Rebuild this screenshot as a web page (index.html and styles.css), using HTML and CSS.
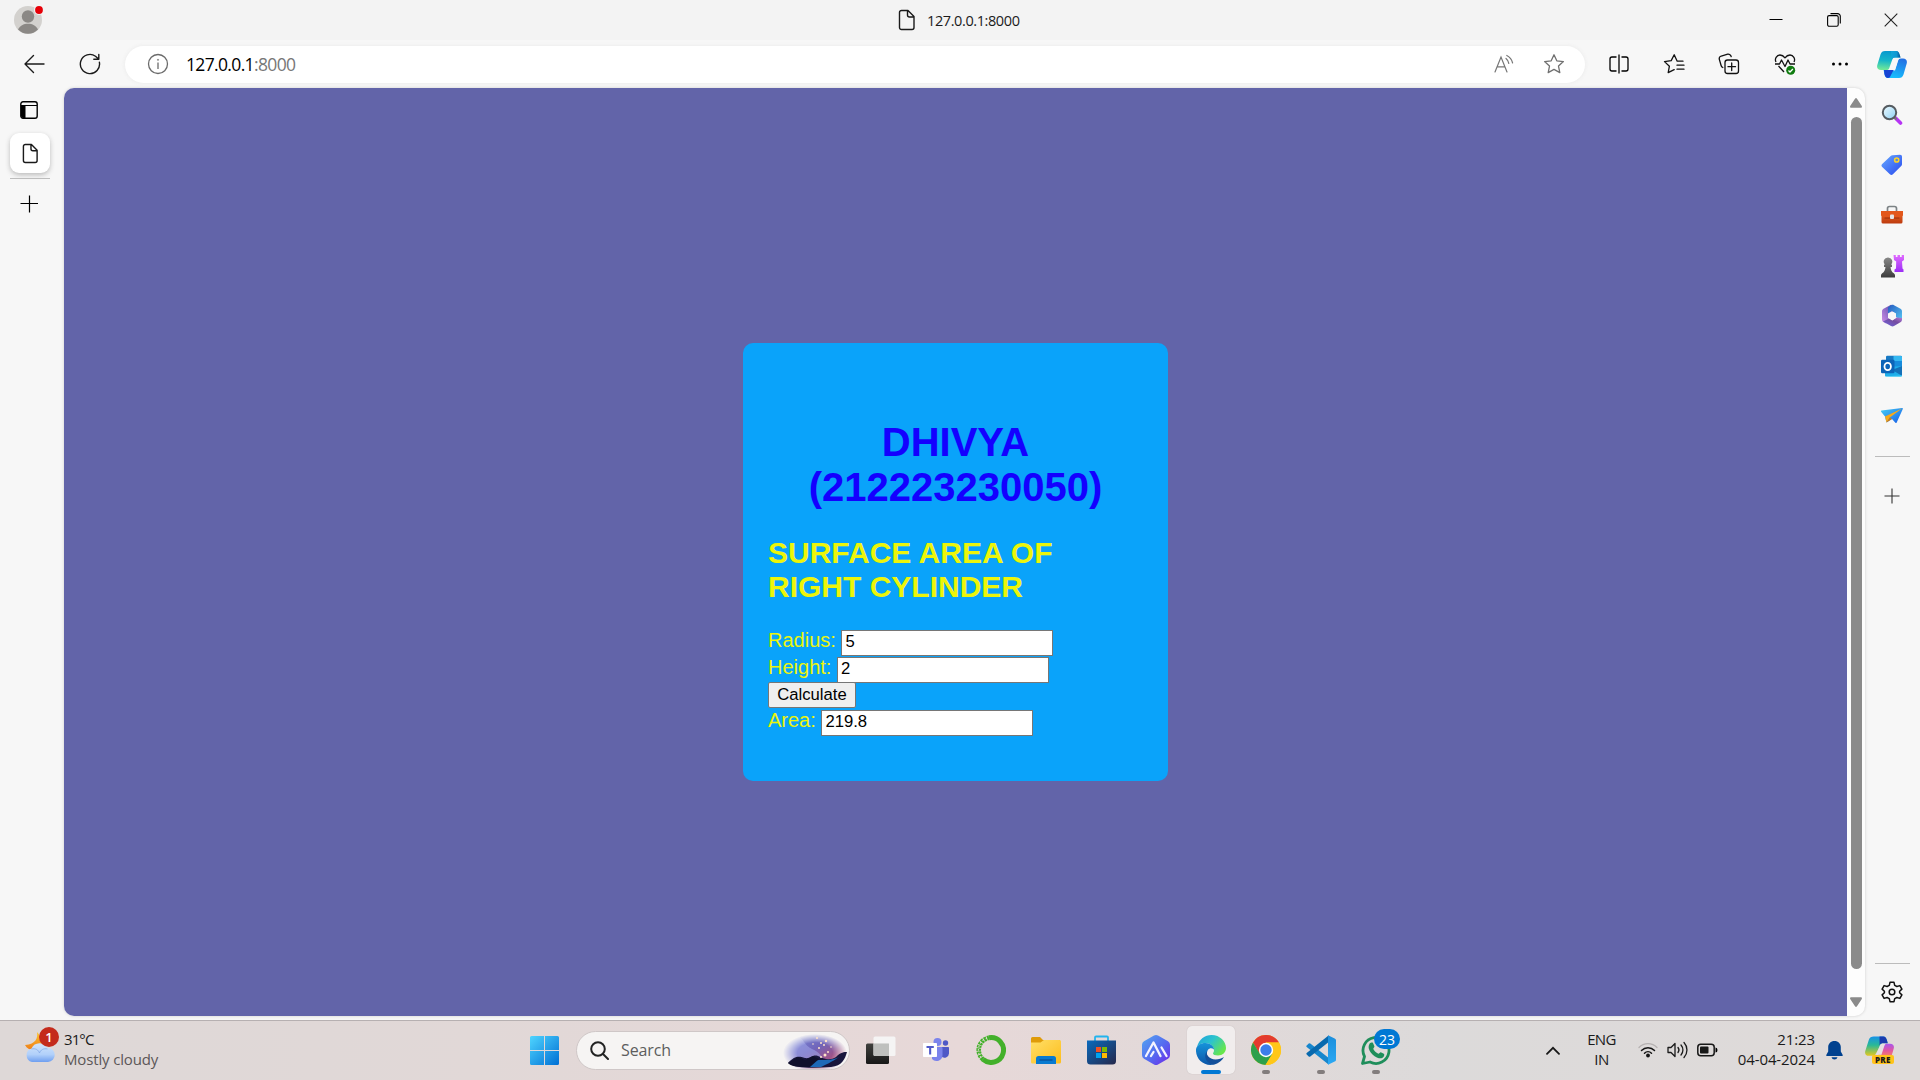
FILE: index.html
```html
<!DOCTYPE html>
<html lang="en">
<head>
<meta charset="utf-8">
<title>127.0.0.1:8000</title>
<link rel="stylesheet" href="styles.css">
</head>
<body>
<svg class="defs" width="0" height="0" aria-hidden="true">
  <defs>
    <linearGradient id="win" x1="0" y1="0" x2="1" y2="1"><stop offset="0" stop-color="#4fd5ff"/><stop offset="1" stop-color="#006fd4"/></linearGradient>
    <linearGradient id="cpTop" x1="0" y1="0" x2="1" y2="0"><stop offset="0" stop-color="#12a5d8"/><stop offset=".6" stop-color="#1098d2"/><stop offset="1" stop-color="#064a90"/></linearGradient>
    <linearGradient id="cpLeft" x1=".4" y1="0" x2=".3" y2="1"><stop offset="0" stop-color="#0798ce"/><stop offset=".5" stop-color="#16b6c9"/><stop offset="1" stop-color="#74eb96"/></linearGradient>
    <linearGradient id="cpRight" x1=".7" y1="0" x2=".3" y2="1"><stop offset="0" stop-color="#2371e4"/><stop offset="1" stop-color="#16c3ff"/></linearGradient>
    <linearGradient id="tag" x1="0" y1="0" x2="1" y2="1"><stop offset="0" stop-color="#67aaff"/><stop offset="1" stop-color="#2848ee"/></linearGradient>
    <linearGradient id="lens" x1="0" y1="0" x2="1" y2="1"><stop offset="0" stop-color="#f0fbff"/><stop offset="1" stop-color="#8dd0f4"/></linearGradient>
    <linearGradient id="rook" x1="0" y1="0" x2="0" y2="1"><stop offset="0" stop-color="#e06bff"/><stop offset="1" stop-color="#9b2df5"/></linearGradient>
    <linearGradient id="pawn" x1="0" y1="0" x2="0" y2="1"><stop offset="0" stop-color="#888"/><stop offset="1" stop-color="#3c3c3c"/></linearGradient>
    <linearGradient id="box" x1="0" y1="0" x2="0" y2="1"><stop offset="0" stop-color="#ed6b24"/><stop offset="1" stop-color="#bd3a0f"/></linearGradient>
    <linearGradient id="m1" x1="0" y1="1" x2="1" y2="0"><stop offset="0" stop-color="#d090e8"/><stop offset="1" stop-color="#5146a8"/></linearGradient>
    <linearGradient id="m2" x1="0" y1="0" x2="1" y2="1"><stop offset="0" stop-color="#235ac0"/><stop offset="1" stop-color="#58c8f4"/></linearGradient>
    <linearGradient id="m3" x1="0" y1="1" x2="1" y2="0"><stop offset="0" stop-color="#6d67e0"/><stop offset=".6" stop-color="#754ca0"/><stop offset="1" stop-color="#b57bd8"/></linearGradient>
    <linearGradient id="plane" x1="0" y1="0" x2="1" y2="1"><stop offset="0" stop-color="#45cff5"/><stop offset="1" stop-color="#175be8"/></linearGradient>
    <linearGradient id="cloud" x1="0" y1="0" x2="0" y2="1"><stop offset="0" stop-color="#d1e4fb"/><stop offset=".6" stop-color="#b1d0fa"/><stop offset="1" stop-color="#6f9ff0"/></linearGradient>
    <linearGradient id="moon" x1="0" y1="0" x2="0" y2="1"><stop offset="0" stop-color="#fcc531"/><stop offset="1" stop-color="#ee7c18"/></linearGradient>
    <linearGradient id="dark" x1="0" y1="0" x2="0" y2="1"><stop offset="0" stop-color="#40413e"/><stop offset="1" stop-color="#181818"/></linearGradient>
    <linearGradient id="folder" x1="0" y1="0" x2="1" y2="1"><stop offset="0" stop-color="#ffdf68"/><stop offset="1" stop-color="#fdbd1c"/></linearGradient>
    <linearGradient id="store" x1="0" y1="0" x2="1" y2="1"><stop offset="0" stop-color="#0a6abd"/><stop offset="1" stop-color="#26284b"/></linearGradient>
    <linearGradient id="hex" x1="0" y1="0" x2="1" y2="1"><stop offset="0" stop-color="#54a7f0"/><stop offset=".55" stop-color="#5569f0"/><stop offset="1" stop-color="#7026e8"/></linearGradient>
    <linearGradient id="edgeTop" x1="0" y1="0" x2="1" y2=".6"><stop offset="0" stop-color="#1f9fdc"/><stop offset=".5" stop-color="#2cc3ce"/><stop offset="1" stop-color="#67e64c"/></linearGradient>
    <linearGradient id="edgeBody" x1="0" y1="0" x2="0" y2="1"><stop offset="0" stop-color="#1593da"/><stop offset="1" stop-color="#0c55a8"/></linearGradient>
    <linearGradient id="vsc" x1="0" y1="0" x2="0" y2="1"><stop offset="0" stop-color="#1c8edb"/><stop offset="1" stop-color="#2ba9f4"/></linearGradient>
    <linearGradient id="pre1" x1="0" y1="0" x2="0" y2="1"><stop offset="0" stop-color="#1691e8"/><stop offset=".45" stop-color="#29b996"/><stop offset="1" stop-color="#e5c81f"/></linearGradient>
    <linearGradient id="pre2" x1="0" y1="0" x2="0" y2="1"><stop offset="0" stop-color="#a956ee"/><stop offset=".5" stop-color="#e2579f"/><stop offset="1" stop-color="#fb8a58"/></linearGradient>
    <linearGradient id="sky" x1="0" y1="0" x2="1" y2="1"><stop offset="0" stop-color="#7f99e4"/><stop offset=".45" stop-color="#7065ba"/><stop offset=".75" stop-color="#a94f7d"/><stop offset="1" stop-color="#6d69c5"/></linearGradient>
    <radialGradient id="fade"><stop offset=".55" stop-color="#fff"/><stop offset="1" stop-color="#000"/></radialGradient>
    <mask id="skyMask"><ellipse cx="32" cy="20" rx="32" ry="19" fill="url(#fade)"/></mask>
  </defs>
</svg>

<header class="titlebar">
  <div class="avatar">
    <svg width="32" height="32" viewBox="0 0 32 32"><circle cx="15" cy="17" r="14" fill="#d3d1ce"/><circle cx="15" cy="13.5" r="6.2" fill="#8b8885"/><path d="M5 26.6c2-4 5.500-5.800 10-5.800s8 1.800 10 5.800A14 14 0 0 1 5 26.600z" fill="#8b8885"/><circle cx="26" cy="7" r="5" fill="#f3f3f3"/><circle cx="26" cy="7" r="3.900" fill="#e60008"/></svg>
  </div>
  <div class="page-title">
    <svg width="18" height="22" viewBox="0 0 18 22" fill="none" stroke="#1a1a1a" stroke-width="1.400" stroke-linejoin="round"><path d="M3.500 1.500H10l6 6v11a2 2 0 0 1-2 2H3.500a2 2 0 0 1-2-2v-15a2 2 0 0 1 2-2zM9.500 1.500V6a2 2 0 0 0 2 2H16"/></svg>
    <span>127.0.0.1:8000</span>
  </div>
  <div class="window-controls">
    <svg width="14" height="14" viewBox="0 0 14 14" stroke="#000"><path d="M.5 6.500h13"/></svg>
    <svg width="14" height="14" viewBox="0 0 14 14" stroke="#000" stroke-width="1.100" fill="none"><rect x=".6" y="2.600" width="10.600" height="10.600" rx="1.500"/><path d="M3.500.6h7A2.700 2.700 0 0 1 13.300 3.300V10.500"/></svg>
    <svg width="14" height="14" viewBox="0 0 14 14" stroke="#222" stroke-width="1.100"><path d="M.7.7l12.600 12.600M13.300.7L.7 13.300"/></svg>
  </div>
</header>

<nav class="toolbar">
  <svg class="back" width="22" height="20" viewBox="0 0 22 20" fill="none" stroke="#1b1b1b" stroke-width="1.400" stroke-linecap="round" stroke-linejoin="round"><path d="M10.500 1.500L2 10l8.500 8.500M2 10h19"/></svg>
  <svg class="reload" width="22" height="22" viewBox="0 0 22 22" fill="none" stroke="#1b1b1b" stroke-width="1.400" stroke-linecap="round" stroke-linejoin="round"><path d="M20.400 9.300A9.600 9.600 0 1 1 16.500 3.200L19.600 6M19.800 1.500V6.300h-5"/></svg>
  <div class="address">
    <svg width="22" height="22" viewBox="0 0 22 22" fill="none" stroke="#6b6b6b" stroke-width="1.300"><circle cx="11" cy="11" r="9.500"/><path d="M11 9.500v6.500"/><circle cx="11" cy="6.800" r=".6" fill="#6b6b6b" stroke-width=".6"/></svg>
    <span class="url">127.0.0.1<i>:8000</i></span>
    <svg class="read" width="20" height="20" viewBox="0 0 20 20" fill="none" stroke="#767676" stroke-width="1.200" stroke-linecap="round"><path d="M1 18L7 3l6 15M3.200 12.800h7.600M12 4.500a8 8 0 0 1 2.800 4.800M12.800 1.500A11 11 0 0 1 18.600 9"/></svg>
    <svg class="star" width="22" height="22" viewBox="0 0 22 22" fill="none" stroke="#707070" stroke-width="1.300" stroke-linejoin="round"><path d="M11 1.800l2.800 6 6.600.8-4.900 4.500 1.300 6.500L11 16.400l-5.800 3.200 1.300-6.500L1.600 8.600l6.600-.8z"/></svg>
  </div>
  <div class="actions">
    <span><svg width="20" height="20" viewBox="0 0 20 20" fill="none" stroke="#000" stroke-width="1.300"><path d="M10 .5v19M7.500 3H3a2 2 0 0 0-2 2v10a2 2 0 0 0 2 2h4.500M12.500 3H17a2 2 0 0 1 2 2v10a2 2 0 0 1-2 2h-4.500"/></svg></span>
    <span><svg width="22" height="22" viewBox="0 0 22 22" fill="none" stroke="#111" stroke-width="1.300" stroke-linejoin="round" stroke-linecap="round"><path d="M20 8.200h-5.800L11.200 1.800 8.200 7.600 1.500 8.600l4.900 4.600-1.200 6.500 6-3.100M14 12.200h7M14 16.200h7"/></svg></span>
    <span><svg width="22" height="22" viewBox="0 0 22 22" fill="none" stroke="#111" stroke-width="1.300" stroke-linecap="round"><rect x="7" y="7" width="13.500" height="13.500" rx="2.500"/><path d="M13.700 10v7.500M10 13.700h7.500M4.800 14.500a3 3 0 0 1-1.700-2L1.200 6A3 3 0 0 1 3.300 3l6.400-1.800a3 3 0 0 1 3.500 2.400"/></svg></span>
    <span><svg width="22" height="22" viewBox="0 0 22 22" fill="none" stroke="#111" stroke-width="1.300" stroke-linejoin="round"><path d="M2 9C.3 5.800 2.700 2 6 2c2.300 0 3.800 1.200 5 2.800C12.200 3.200 13.700 2 16 2c3.300 0 5.700 3.800 4 7M1 11h4.500l2-4 3.500 6.500L14 7l2 4h5M4.500 13l5.500 6"/><circle cx="16.700" cy="17.300" r="4.500" fill="#107c10" stroke="none"/><path d="M14.500 17.500l1.500 1.500 2.900-3" stroke="#fff"/></svg></span>
    <span><svg width="18" height="6" viewBox="0 0 18 6"><circle cx="2.500" cy="3" r="1.500"/><circle cx="9" cy="3" r="1.500"/><circle cx="15.500" cy="3" r="1.500"/></svg></span>
    <span class="copilot"><svg width="30" height="27" viewBox="0 0 30 27"><path d="M8 0h11c2 0 3 1.500 3.700 4l.8 2.500h-5.500c-1.500 0-2.300.8-2.900 2.600L12.300 17c-.5 1.400-1.300 2-2.800 2H4c-3 0-4.500-2-3.700-5L3.500 3.500C4.300 1 5.700 0 8 0z" fill="url(#cpLeft)"/><path d="M14 0h5c2 0 3 1.500 3.700 4l.8 2.500H17.500c-1.500 0-2.300.8-2.900 2.600z" fill="url(#cpTop)"/><path d="M22 27H11c-2 0-3-1.500-3.600-4L6.600 19H10l8 .5 3-9.500c.5-1.700 1.300-2.500 3-2.500h2c3 0 4.500 2 3.700 5L26.500 23.500C25.700 26 24.300 27 22 27z" fill="url(#cpRight)"/><path d="M7 19h9.500L13.500 25c-.5 1.300-1.200 2-2.500 2-2 0-3-1.500-3.600-4z" fill="#1743d3"/><path d="M18 7h5.500c-1.500.3-2.200 1-2.700 2.700l-2.500 8c-.4 1-1 1.300-2 1.300h-5c1.200-.2 1.700-.9 2.100-2.200l2.500-7.500C16.400 7.700 17 7 18 7z" fill="#f7f7f7"/></svg></span>
  </div>
</nav>

<main class="workspace">
  <aside class="tabs">
    <svg class="tabs-toggle" width="18" height="18" viewBox="0 0 18 18"><rect x=".8" y=".8" width="16.400" height="16.400" rx="2.200" fill="none" stroke="#000" stroke-width="1.400"/><path d="M1 5h4.500v12H3a2 2 0 0 1-2-2zM1 4.100h16v.8H1z"/></svg>
    <div class="tab"><svg width="17" height="21" viewBox="0 0 18 22" fill="none" stroke="#1a1a1a" stroke-width="1.500" stroke-linejoin="round"><path d="M3.500 1.500H10l6 6v11a2 2 0 0 1-2 2H3.500a2 2 0 0 1-2-2v-15a2 2 0 0 1 2-2zM9.500 1.500V6a2 2 0 0 0 2 2H16"/></svg></div>
    <div class="tab-line"></div>
    <svg class="tab-new" width="18" height="18" viewBox="0 0 18 18" stroke="#000" stroke-width="1.200"><path d="M9.500 .5v17M.5 8.500h18"/></svg>
  </aside>

  <section class="frame">
    <div class="page">
      <div class="card">
        <h1>DHIVYA (212223230050)</h1>
        <h2>SURFACE AREA OF RIGHT CYLINDER</h2>
        <form>
          <div class="row"><label for="radius">Radius:</label><input id="radius" type="text" value="5"></div>
          <div class="row"><label for="height">Height:</label><input id="height" type="text" value="2"></div>
          <div class="row"><button type="button">Calculate</button></div>
          <div class="row"><label for="area">Area:</label><input id="area" type="text" value="219.8"></div>
        </form>
      </div>
    </div>
    <div class="scrollbar">
      <svg width="12" height="10" viewBox="0 0 12 10"><path d="M5 .8a1.200 1.200 0 0 1 2 0L11.800 8c.4.900 0 1.800-1 1.800H1.200c-1 0-1.400-.9-1-1.800z" fill="#8b8b8b"/></svg>
      <div class="thumb"></div>
      <svg width="12" height="10" viewBox="0 0 12 10"><path d="M5 9.200a1.200 1.200 0 0 0 2 0L11.800 2c.4-.9 0-1.800-1-1.800H1.200c-1 0-1.400.9-1 1.800z" fill="#8b8b8b"/></svg>
    </div>
  </section>

  <aside class="sidebar">
    <div class="apps">
      <span><svg width="22" height="22" viewBox="0 0 22 22"><path d="M14.500 14l5 5" stroke="#b634f4" stroke-width="3.600" stroke-linecap="round"/><path d="M12.500 12.500l3 3" stroke="#777" stroke-width="2"/><circle cx="8.500" cy="8.500" r="6.700" fill="url(#lens)" stroke="#555b60" stroke-width="2"/></svg></span>
      <span><svg width="22" height="22" viewBox="0 0 22 22"><path d="M11.500 1.300L19 .7c1.400 0 2 .7 2 2v7.500c0 .8-.3 1.400-.8 1.900l-8.300 8.200c-1 1-2 1-3 0L1.200 13c-1-1-1-2 0-3l8.500-8c.5-.5 1-.7 1.800-.7z" fill="url(#tag)"/><circle cx="15.700" cy="6" r="2.100" fill="#5f8bd0" stroke="#ffd325" stroke-width="1.500"/></svg></span>
      <span><svg width="24" height="20" viewBox="0 0 24 20"><path d="M7.500 6V3.500a2 2 0 0 1 2-2h5a2 2 0 0 1 2 2V6" fill="none" stroke="#7c8285" stroke-width="1.700"/><rect x="1.500" y="6" width="21" height="12.500" rx="1.500" fill="url(#box)"/><path d="M1 6h22v4.500l-4 2.500H5l-4-2.500z" fill="#e3571b"/><path d="M4.500 13h15" stroke="#962e0d"/><rect x="10" y="9.500" width="4" height="4.500" rx="1" fill="#e5e5e5"/></svg></span>
      <span><svg width="24" height="24" viewBox="0 0 24 24"><path d="M13.500 1h2.300v2h1.700V1h2.500v2h1.700V1H24v5l-2 1.500.5 7 1 1V18h-9v-2.500l1.500-1 .2-7-2.200-1.500z" fill="url(#rook)"/><path d="M8 3.500a4.300 4.300 0 0 1 3.300 7.200l.7.300v2h-1.500c.3 3 1.200 5 3.300 6.300.8.500 1.200 1.200 1.200 2v2.200H1v-2.200c0-.8.400-1.500 1.200-2C4.300 18 5.200 16 5.500 13H4v-2l.7-.3A4.300 4.300 0 0 1 8 3.500z" fill="url(#pawn)"/></svg></span>
      <span><svg width="22" height="23" viewBox="0 0 22 23"><path d="M10 .7L3 4.500C1.700 5.200 1 6.300 1 7.500v8c0 1.200.7 2.300 1.700 2.800L5 19.500l5-3V11c0-2 3-3 3-4.500z" fill="url(#m1)"/><path d="M7 9.500V3.500l3-2.200c1-.6 2-.6 3 0l6.500 3.500c1 .7 1.500 1.500 1.500 2.700v9L15 13V10L11 7z" fill="url(#m2)"/><path d="M2 17.500l6-3 3.500 2 4-3 5.500.5v1.500c0 1.200-.6 2.300-1.600 2.800L13 22c-1 .6-2 .6-3 0z" fill="url(#m3)"/><path d="M11 7.300l4 2.200v4.400l-4 2.400-4-2.400V9.500z" fill="#f7f7f7"/></svg></span>
      <span><svg width="22" height="22" viewBox="0 0 22 22"><rect x="5" y=".7" width="16" height="17" rx="1.200" fill="#1779c4"/><path d="M12.500 1H20q1 0 1 1v8h-8.500z" fill="#35b8f1"/><path d="M13 6h8v6h-8z" fill="#178bdc"/><path d="M4 12h4l13-1v9.500q0 1-1 1H5q-1 0-1-1z" fill="#1eaeea"/><path d="M21 11v9.800L11 15z" fill="#1470b8"/><path d="M4 21.300L21 20.500v.5c0 .3-.5.5-1 .5H5z" fill="#41cff7"/><rect y="4.800" width="13.500" height="13.500" rx="1.200" fill="#0c64b8"/><ellipse cx="6.700" cy="11.500" rx="3.200" ry="3.600" fill="none" stroke="#fff" stroke-width="1.800"/></svg></span>
      <span><svg width="24" height="20" viewBox="0 0 24 20"><path d="M1.500 4.500L22 2c.8 0 1 .6.700 1.200l-6 13.300c-.3.700-.9.700-1.300.2L12 13l-5.500 3.500-1.500-6L1.300 6C.8 5.400.8 4.700 1.500 4.500z" fill="url(#plane)"/><path d="M22 2.500L5 10.500l1.500 6 3.300-5z" fill="#f7a91a"/><path d="M6.500 16.500l3.300-5 2.200 1.500z" fill="#d97a07"/></svg></span>
    </div>
    <hr>
    <svg class="add" width="16" height="16" viewBox="0 0 16 16" stroke="#333" stroke-width="1.100"><path d="M8 .5v15M.5 8h15"/></svg>
    <hr class="bottom-line">
    <svg class="gear" width="22" height="22" viewBox="0 0 22 22" fill="none" stroke="#111" stroke-width="1.500" stroke-linejoin="round"><path d="M9 1.300h4l.7 3 2.200 1.200 3-.9 2 3.500-2.300 2.100v1.600l2.300 2.100-2 3.500-3-.9-2.200 1.200-.7 3H9l-.7-3-2.200-1.200-3 .9-2-3.500 2.300-2.100v-1.600L1.100 8.100l2-3.500 3 .9 2.200-1.200z"/><circle cx="11" cy="11" r="2.800"/></svg>
  </aside>
</main>

<footer class="taskbar">
  <div class="weather">
    <svg width="32" height="36" viewBox="0 0 32 36"><path d="M13 5c1 6-1 12-12 13 2 4 6 6 12 5l9-7z" fill="url(#moon)"/><path d="M8 35a7 7 0 0 1-.5-13.500A9 9 0 0 1 23.500 21 7 7 0 0 1 24 35z" fill="url(#cloud)"/><path d="M7.500 22c4-1 7 1 8 4 1-3 4-5 8-4" fill="none" stroke="#86abe8" stroke-width=".8"/></svg>
    <b class="badge red">1</b>
    <div class="weather-text"><span>31°C</span><span class="muted">Mostly cloudy</span></div>
  </div>

  <div class="dock">
    <svg class="start" width="29" height="29" viewBox="0 0 29 29"><path d="M0 1.500Q0 0 1.500 0H14v14H0zM15 0h12.500Q29 0 29 1.500V14H15zM0 15h14v14H1.500Q0 29 0 27.500zM15 15h14v12.500q0 1.500-1.500 1.500H15z" fill="url(#win)"/></svg>
    <div class="search">
      <svg width="19" height="19" viewBox="0 0 19 19" fill="none" stroke="#222" stroke-width="2" stroke-linecap="round"><circle cx="8" cy="8" r="6.800"/><path d="M13 13l5 5"/></svg>
      <span>Search</span>
      <svg class="scene" width="66" height="36" viewBox="0 0 66 36"><g mask="url(#skyMask)"><rect width="66" height="36" fill="url(#sky)"/><path d="M12 2c10 3 8 10 17 14 8 3 10 9 14 12H0V8z" fill="#a3a8ea" opacity=".55"/></g><path d="M5 30c7-7 10-7 17-5 6 1 7-4 13-2 6 3 12 5 18 1 5-5 8-5 11-5-2 7-5 14-16 15-16 1-35 2-43-4z" fill="#18163c"/><path d="M24 34c5-4 7-7 12-7 8 0 15 0 20-3-7 5-14 8-18 10z" fill="#1d69b8"/><path d="M5 30l10-6 7 3 8-4 6 3-9 8c-10 0-19 0-22-4z" fill="#10102b"/><g fill="#ffe3c8"><circle cx="34" cy="5" r="1"/><circle cx="38" cy="10" r="1"/><circle cx="43" cy="8" r="1.200"/><circle cx="30" cy="11" r=".8"/><circle cx="36" cy="15" r="1"/><circle cx="42" cy="22" r="1.500"/><circle cx="45" cy="19" r="1"/><circle cx="38" cy="24" r="1"/><circle cx="48" cy="14" r=".8"/><circle cx="41" cy="12" r="1"/></g></svg>
    </div>
    <span class="app"><svg width="30" height="28" viewBox="0 0 30 28"><rect y="7.500" width="23" height="20.500" rx="1.500" fill="url(#dark)"/><rect x="7.500" y=".5" width="22" height="19.500" rx="1.500" fill="#f6f6f6" fill-opacity=".95"/><path d="M7.500 7.500H23V20H9q-1.500 0-1.500-1.500z" fill="#bfc0be"/></svg></span>
    <span class="app"><svg width="26" height="24" viewBox="0 0 26 24"><circle cx="22.500" cy="5" r="2.700" fill="#4f58c6"/><path d="M18 9h7.200q.8 0 .8.800V15a4.500 4.500 0 0 1-8 3z" fill="#4f58c6"/><circle cx="14.500" cy="4" r="4" fill="#7b83eb"/><path d="M9 9h9.500q1 0 1 1v7a6 6 0 0 1-10.500 4z" fill="#7b83eb"/><rect y="5" width="14" height="14" rx=".7" fill="#fff"/><path d="M3.500 8h7.300v2H8.200v6.600H6.100V10H3.500z" fill="#5059c9"/></svg></span>
    <span class="app"><svg width="30" height="30" viewBox="0 0 30 30" fill="none" stroke="#43b02a"><path d="M13 2.800a12.400 12.400 0 1 1-6 21.600" stroke-width="5"/><path d="M7 24.400A12.400 12.400 0 0 1 13 2.800" stroke-width="4.600" stroke-dasharray="2.500 .7"/><path d="M4.900 22.500A12.600 12.600 0 0 1 11 3" stroke="#e4d8d8" stroke-width="1.100" stroke-dasharray="1.500 2.200"/></svg></span>
    <span class="app"><svg width="30" height="27" viewBox="0 0 30 27"><path d="M0 1.500Q0 0 1.500 0H9l3 3h17v9H0z" fill="#df9b09"/><path d="M0 5.500h9.500L13 3h15.500Q30 3 30 4.500V25q0 1.500-1.500 1.500h-27Q0 26.500 0 25z" fill="url(#folder)"/><path d="M5 27v-5.500Q5 19 7.500 19h15q2.500 0 2.500 2.500V27z" fill="#087ad0"/><path d="M8.500 23h13" stroke="#0a4c92" stroke-width="1.200"/></svg></span>
    <span class="app"><svg width="29" height="30" viewBox="0 0 29 30"><path d="M8 6V2.500q0-1 1-1h11q1 0 1 1V6" fill="none" stroke="#23b4ee" stroke-width="1.800"/><path d="M0 5.500h29V26q0 3.500-3.500 3.500h-22Q0 29.500 0 26z" fill="url(#store)"/><path d="M9 12h5v5H9z" fill="#f25022"/><path d="M15 12h5v5h-5z" fill="#7fba00"/><path d="M9 18h5v5H9z" fill="#00a4ef"/><path d="M15 18h5v5h-5z" fill="#ffb900"/></svg></span>
    <span class="app"><svg width="28" height="30" viewBox="0 0 28 30"><path d="M12 .6q2-1.200 4 0l10 5.700q2 1.200 2 3.400v10.600q0 2.200-2 3.400l-10 5.700q-2 1.200-4 0L2 23.700q-2-1.200-2-3.400V9.700q0-2.200 2-3.400z" fill="url(#hex)"/><path d="M4 21L11.500 7.500l7 13.500M9 21l2.500-4M19.500 12.500L24.500 21" fill="none" stroke="#f4f4ff" stroke-width="2.300" stroke-linecap="round" stroke-linejoin="round"/></svg></span>
    <span class="app active"><svg width="30" height="30" viewBox="0 0 30 30"><path d="M1 12C3 4 9 0 15.500 0 24 0 30 6.500 30 13c0 4.500-3.500 7.500-8 7.500-3 0-5-1-5-2 0-.7 1-1.200 1-3.500C18 11 14 8 9.500 8 6 8 3 9.500 1 12z" fill="url(#edgeTop)"/><path d="M0 14.500C.5 10.500 4.500 8 9.500 8c4.800 0 8.500 3 8.500 6.500-3.800-3-7.500.2-7 4.800.5 4 4 7.700 9.500 8.700-2 1.300-4 2-6 2C6 30-.5 23 0 14.500z" fill="url(#edgeBody)"/><path d="M11.500 15.500C9 19 13 24.500 19.500 24.500c3.500 0 6-1.200 8.500-2.500-2 3.500-5 6-9.500 7.500C11.500 29.500 6 22 11.500 15.500z" fill="#124f9a"/></svg></span>
    <span class="app open"><svg width="30" height="30" viewBox="0 0 30 30"><circle cx="15" cy="15" r="15" fill="#ffc719"/><path d="M2 7.500A15 15 0 0 1 28 7.500H15L8.500 18.700z" fill="#e33b2e"/><path d="M2 7.500A15 15 0 0 0 14.500 30l7-11.200L9 19z" fill="#2da04c"/><path d="M15 7.500h13A15 15 0 0 1 14.500 30l7-11.200z" fill="#ffc719"/><circle cx="15" cy="15" r="7.200" fill="#fff"/><circle cx="15" cy="15" r="5.700" fill="#3c7eea"/></svg></span>
    <span class="app open"><svg width="30" height="30" viewBox="0 0 30 30"><path d="M.7 10.500l2-1.900q.8-.6 1.600 0L24 24l-1.500 5.500L.7 12q-.8-.8 0-1.500z" fill="#1686cd"/><path d="M.7 19.500l2 1.900q.8.600 1.600 0L24 6 22.500.5.700 18q-.8.800 0 1.500z" fill="#0869ae"/><path d="M22 .3l6.700 3.100Q30 4 30 5.300v19.400q0 1.300-1.300 1.900L22 29.700z" fill="url(#vsc)"/></svg></span>
    <span class="app open whatsapp"><svg width="30" height="30" viewBox="0 0 30 30"><path d="M1.500 28.500l2-7A13 13 0 1 1 9 27z" fill="none" stroke="#1f8e5b" stroke-width="2.800" stroke-linejoin="round"/><path d="M10.500 7.500c.8 0 1.300 0 1.600.8l1.300 3c.3.800-1.400 2.200-1.100 2.800 1.200 2.200 2.600 3.500 5 4.700.7.300 1.800-1.700 2.500-1.500l3 1.500c.8.400.5 2-.2 3-2.200 2.700-6 1.500-9-.6-3-2-5.300-5-5.800-7.700-.5-3 .8-6 2.700-6z" fill="#1f8e5b"/></svg><b class="badge blue">23</b></span>
  </div>

  <div class="tray">
    <svg class="chevron" width="14" height="9" viewBox="0 0 14 9" fill="none" stroke="#181818" stroke-width="1.800" stroke-linecap="round"><path d="M1 7.800L7 1.800l6 6"/></svg>
    <div class="lang"><span>ENG</span><span>IN</span></div>
    <svg class="wifi" width="20" height="16" viewBox="0 0 20 16" fill="none" stroke-linecap="round"><path d="M1 5.500a12.500 12.500 0 0 1 18 0" stroke="#b5b1b1" stroke-width="1.300"/><path d="M3.500 8.500a9 9 0 0 1 13 0M6.500 11.200a5 5 0 0 1 7 0" stroke="#151515" stroke-width="1.500"/><circle cx="10" cy="13.500" r="1.900" fill="#151515"/></svg>
    <svg class="sound" width="21" height="18" viewBox="0 0 21 18" fill="none" stroke="#1a1a1a" stroke-width="1.300" stroke-linecap="round" stroke-linejoin="round"><path d="M1 6.500h3L8 2.500v13l-4-4H1zM11 6.500a4 4 0 0 1 0 5M14 4a7.500 7.500 0 0 1 0 10M17 1.500a11 11 0 0 1 0 15"/></svg>
    <svg class="battery" width="21" height="14" viewBox="0 0 21 14"><rect x=".8" y="1.300" width="16.400" height="11.400" rx="3" fill="none" stroke="#181818" stroke-width="1.500"/><rect x="3" y="3.500" width="8.500" height="7" rx="1" fill="#181818"/><path d="M18.500 4.500q2 0 2 2.500t-2 2.500z"/></svg>
    <div class="clock"><span>21:23</span><span>04-04-2024</span></div>
    <svg class="bell" width="17" height="19" viewBox="0 0 17 19" fill="#00418f"><path d="M8.500 0c3.700 0 6.300 2.700 6.300 6v4.500l1.800 3.200c.4.700 0 1.300-.7 1.300H1.100c-.7 0-1.100-.6-.7-1.300l1.800-3.200V6c0-3.300 2.600-6 6.300-6zM5.500 16.300h6a3.100 3.100 0 0 1-6 0z"/></svg>
    <div class="pre"><svg width="29" height="28" viewBox="0 0 30 28"><path d="M9 0h10c2 0 3 1.500 3.700 4l.8 3h-6.200L10 20H4c-3 0-4.500-2-3.700-5L4 3.500C4.800 1 6.500 0 9 0z" fill="url(#pre1)"/><path d="M15 0h4c2 0 3 1.500 3.700 4l.8 3H18c-1.500 0-2.300.8-2.900 2.600z" fill="#1a3cae"/><path d="M20 7.500h6c3 0 4.500 2 3.700 5L27 22H12z" fill="url(#pre2)"/><path d="M18 7.500h4c-1 .3-1.500 1-2 2.300L17 19h-5.500l3.500-9c.6-1.700 1.500-2.500 3-2.500z" fill="#e6dfe2"/></svg><b>PRE</b></div>
  </div>
</footer>
</body>
</html>
```
FILE: styles.css
```css
* { box-sizing: border-box; }
body {
  margin: 0;
  width: 1920px;
  height: 1080px;
  overflow: hidden;
  display: flex;
  flex-direction: column;
  background: #f7f7f7;
  color: #1b1b1b;
  font-family: "Open Sans", "Noto Sans", sans-serif;
}
svg { display: block; flex: none; }
.defs { position: absolute; }

/* Title bar */
.titlebar {
  flex: 0 0 40px;
  display: flex;
  align-items: center;
  background: #f3f3f3;
}
.avatar { width: 885px; padding: 0 0 2px 13px; }
.page-title {
  display: flex;
  align-items: center;
  gap: 11px;
  width: 884px;
  padding-left: 13px;
  font-size: 14.500px;
  letter-spacing: -.4px;
}
.window-controls { display: flex; gap: 43.5px; padding-bottom: 1px; }

/* Toolbar */
.toolbar { flex: 0 0 48px; display: flex; align-items: center; }
.back { margin-left: 23px; }
.reload { margin-left: 34px; }
.address {
  display: flex;
  align-items: center;
  width: 1460px;
  height: 37px;
  margin: 0 6px 0 24px;
  padding-left: 22px;
  border-radius: 19px;
  background: #fff;
  box-shadow: 0 0 4px #e9e9e9;
}
.url { width: 1325px; padding-left: 17px; font-size: 17.500px; letter-spacing: -.65px; line-height: 24px; color: #000; }
.url i { font-style: normal; color: #777; }
.star { margin-left: 29px; }
.actions { display: flex; align-items: center; }
.actions span { width: 55.3px; display: flex; justify-content: center; }
.actions .copilot { width: 50px; }

/* Workspace */
.workspace { flex: 0 0 932px; display: flex; }
.tabs { width: 64px; display: flex; flex-direction: column; padding-left: 10px; }
.tabs-toggle { margin: 13px 0 0 10px; }
.tab {
  display: flex;
  align-items: center;
  justify-content: center;
  width: 40px;
  height: 40px;
  margin-top: 14px;
  border-radius: 9px;
  background: #fff;
  box-shadow: 0 2px 5px #bbb;
}
.tab-line { width: 40px; height: 1px; margin-top: 5px; background: #bdbdbd; }
.tab-new { margin: 16px 0 0 10px; }

.frame {
  display: flex;
  width: 1801px;
  height: 928px;
  border-radius: 10px;
  overflow: hidden;
  background: #fdfdfd;
  box-shadow: 0 0 3px #ccc;
}
.page {
  width: 1783px;
  display: flex;
  align-items: center;
  justify-content: center;
  padding-bottom: 4px;
  background: #6264a9;
  font-family: "Liberation Sans", Arial, sans-serif;
}
.card {
  width: 425px;
  height: 438px;
  margin-top: 24px;
  padding: 77px 25px 0;
  border-radius: 10px;
  background: #0aa3fa;
  color: #edf50a;
  font-size: 20px;
}
.card h1 { margin: 0; font-size: 40px; line-height: 45px; text-align: center; color: #1400ff; }
.card h2 { margin: 26px 0 25px; font-size: 30px; line-height: 34px; }
.row { display: flex; align-items: baseline; height: 26.5px; }
.row label { margin-right: 5.6px; line-height: 23px; }
.row input {
  width: 212px;
  height: 26px;
  padding: 1px 3px 3px;
  border: 1px solid #767676;
  background: #fff;
  color: #000;
  font: 16.670px "Liberation Sans", Arial, sans-serif;
}
.row button {
  width: 88px;
  height: 26px;
  padding: 0 0 1px;
  border: 1px solid #767676;
  border-radius: 2px;
  background: #efefef;
  color: #000;
  font: 16.670px "Liberation Sans", Arial, sans-serif;
}
.scrollbar { width: 18px; padding: 10px 0 8px 3px; display: flex; flex-direction: column; align-items: flex-start; }
.thumb { width: 11px; height: 852px; margin: 9px 0 28px 1px; border-radius: 6px; background: #8b8b8b; }

.sidebar { width: 55px; display: flex; flex-direction: column; align-items: center; padding-right: 1px; }
.apps { display: flex; flex-direction: column; padding-top: 2px; }
.apps span { height: 50.2px; display: flex; align-items: center; justify-content: center; }
.sidebar hr { width: 35px; height: 1px; margin: 15px 0 0; border: 0; background: #bcbcbc; }
.add { margin-top: 31px; }
.sidebar .bottom-line { margin-top: auto; }
.gear { margin: 17px 0 17px; }

/* Taskbar */
.taskbar {
  flex: 0 0 60px;
  display: flex;
  border-top: 1px solid #b6b0b1;
  background: linear-gradient(90deg, #ded8d7, #e1d8d7 25%, #e7d8d8 50%, #dcdada 75%, #dfdad9);
}
.weather { position: relative; width: 530px; display: flex; padding: 6px 0 0 24px; }
.weather-text { display: flex; flex-direction: column; margin: 2px 0 0 8px; font-size: 15px; line-height: 20px; letter-spacing: -.9px; }
.muted { color: #5c5757; letter-spacing: -.15px; }
.badge { position: absolute; display: flex; align-items: center; justify-content: center; color: #fff; font-weight: 400; }
.red { left: 39px; top: 6px; width: 20px; height: 20px; border-radius: 50%; background: #c42b1c; font-size: 13px; font-weight: 600; }
.dock { width: 990px; display: flex; align-items: flex-start; }
.start { margin-top: 15px; }
.search {
  display: flex;
  align-items: center;
  width: 274px;
  height: 39px;
  margin: 10px 4px 0 17px;
  padding-left: 13px;
  border: 1px solid #cfc7c7;
  border-radius: 20px;
  background: #f6f4f3;
  color: #5d5d5d;
  font-size: 16px;
}
.search span { width: 174px; padding: 0 0 1px 12px; letter-spacing: -.1px; }
.app {
  position: relative;
  display: flex;
  align-items: center;
  justify-content: center;
  width: 48px;
  height: 48px;
  margin: 5px 3.500px;
  border-radius: 5px;
}
.dock .search + .app { margin-left: 3px; }
.active { background: #f1eded; box-shadow: 0 0 1px #b9b0b0; }
.active::after, .open::after {
  content: "";
  position: absolute;
  bottom: 0;
  width: 8px;
  height: 4px;
  border-radius: 2px;
  background: #827d7d;
}
.active::after { width: 20px; background: #0078d4; }
.blue { top: 3px; left: 22px; width: 26px; height: 20px; border-radius: 10px; background: #0078d4; font-size: 14px; }
.tray { display: flex; align-items: center; width: 400px; padding-bottom: 1px; font-size: 15px; line-height: 20px; }
.chevron { margin-left: 26px; }
.lang { width: 83px; display: flex; flex-direction: column; align-items: center; padding-bottom: 2px; letter-spacing: -.6px; }
.wifi { margin-left: -5px; }
.sound { margin-left: 9px; }
.battery { margin-left: 9px; }
.clock { width: 97px; display: flex; flex-direction: column; align-items: flex-end; padding-bottom: 2px; letter-spacing: -.1px; }
.bell { margin-left: 11px; }
.pre { position: relative; margin-left: 22px; }
.pre b {
  position: absolute;
  left: 7px;
  top: 19px;
  padding: 0 3px;
  border-radius: 2px;
  background: #ffc31b;
  font-size: 8px;
  font-weight: 800;
  line-height: 9px;
  letter-spacing: .3px;
}
```
